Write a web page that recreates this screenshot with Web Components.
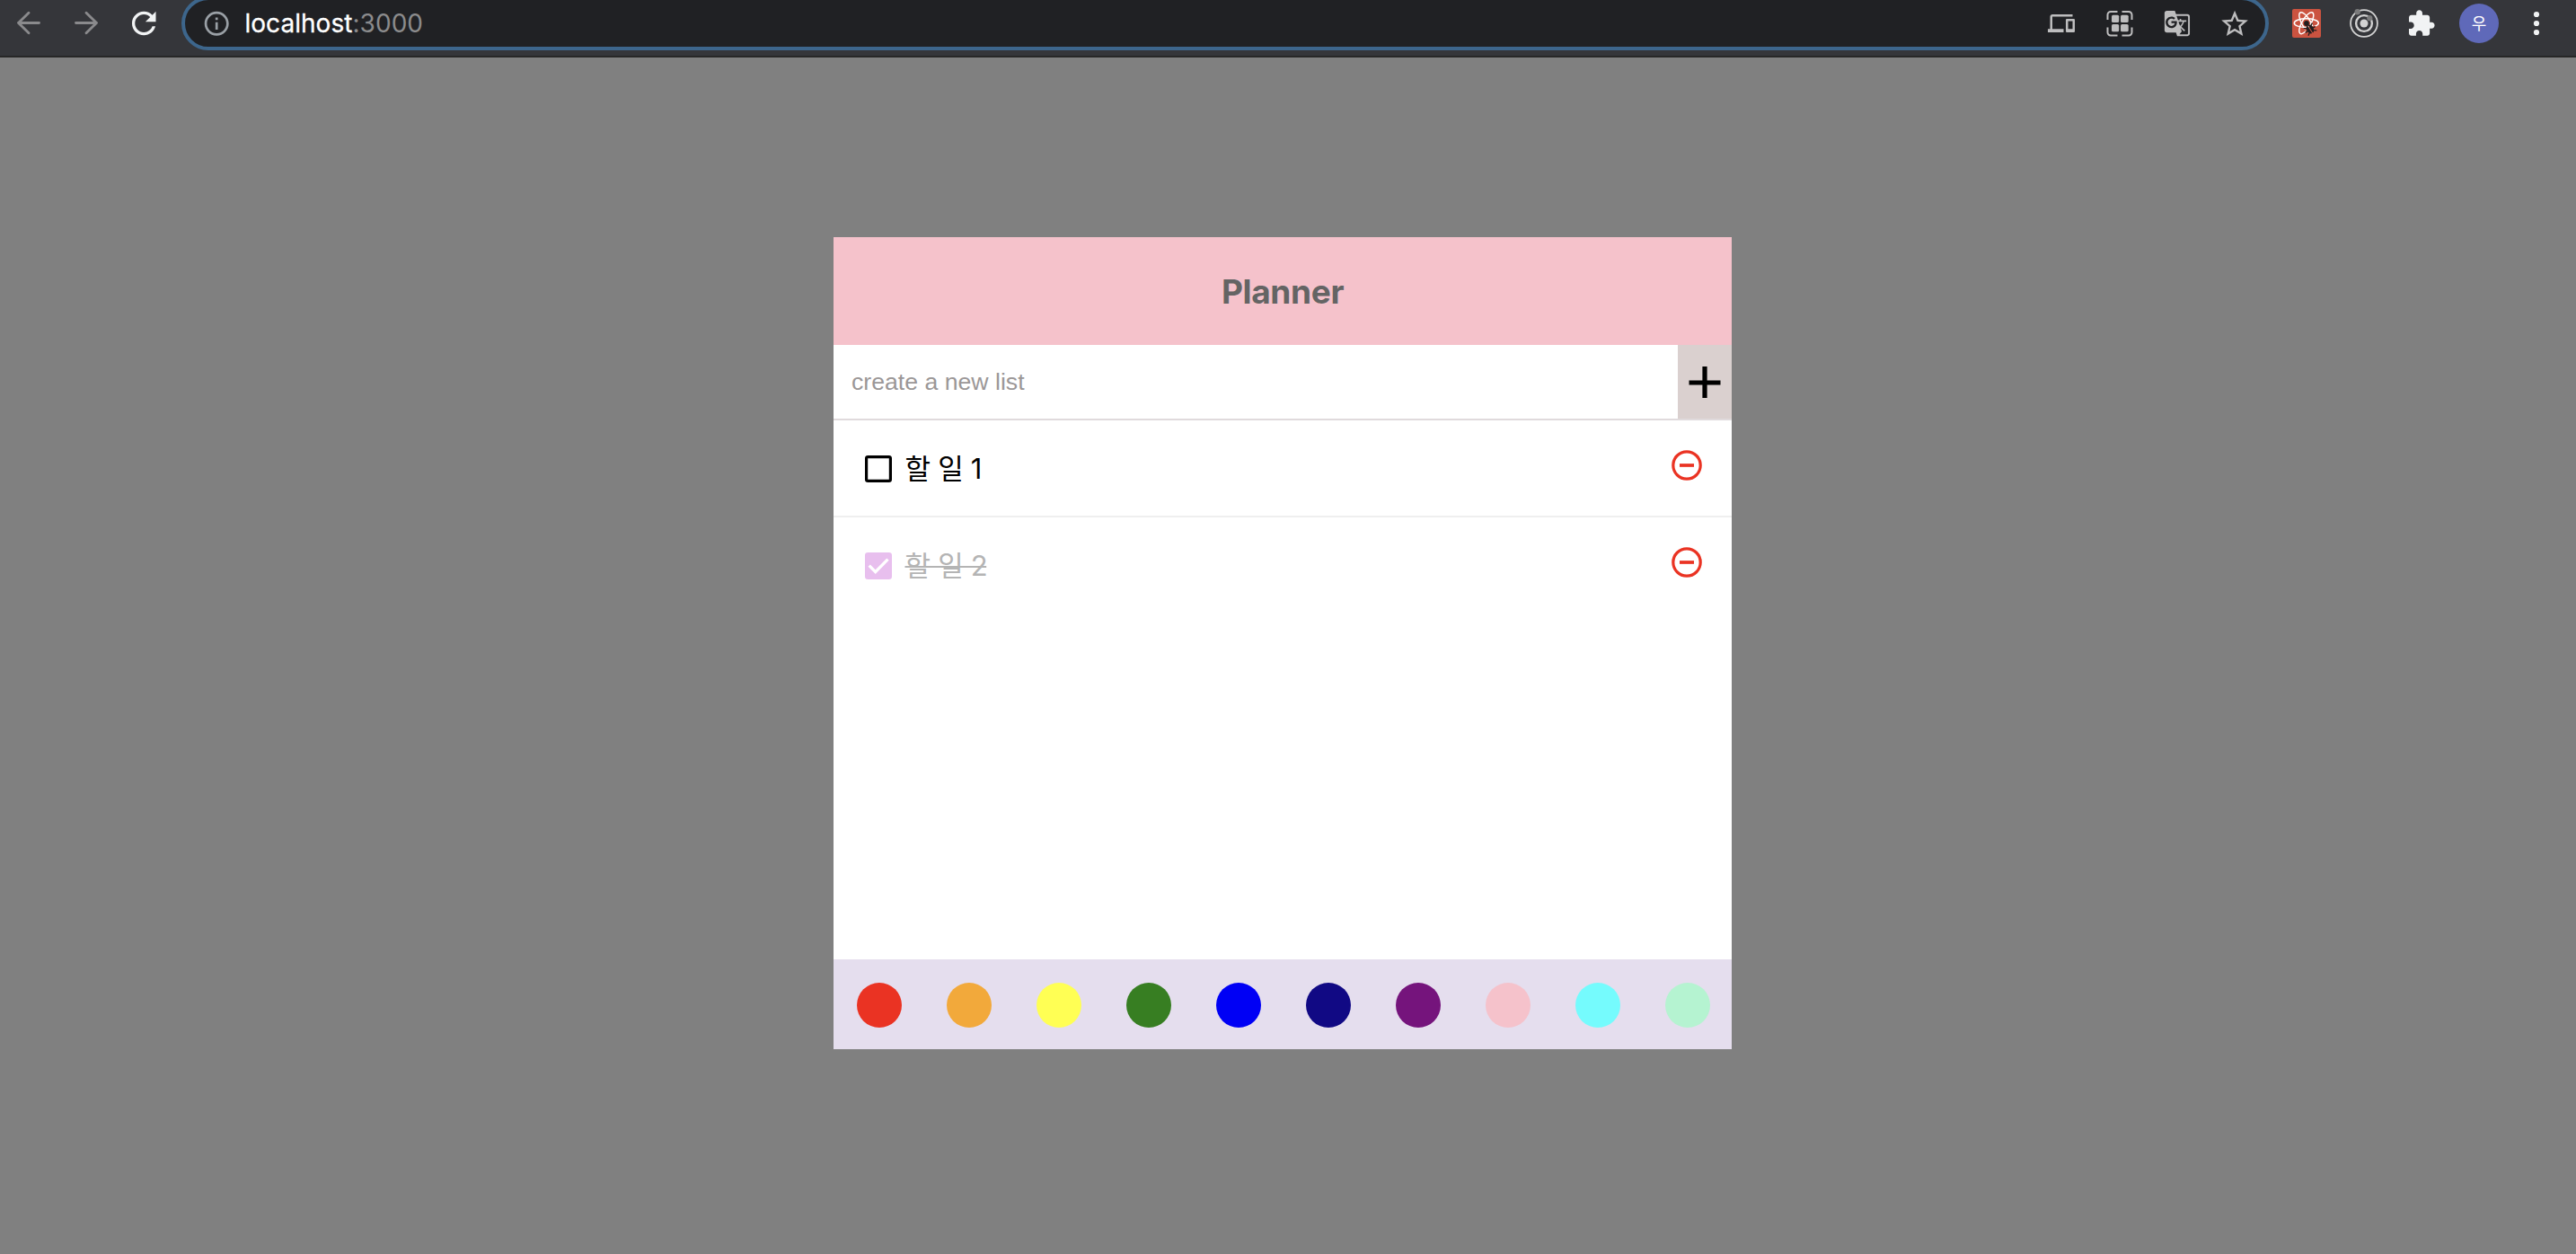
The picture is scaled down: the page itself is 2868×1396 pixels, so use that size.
<!DOCTYPE html>
<html lang="ko">
<head>
<meta charset="utf-8">
<title>Planner</title>
<style>
body {
  margin: 0;
  height: 1396px;
  overflow: hidden;
  background: #808080;
  font-family: Inter, "Noto Sans CJK KR", sans-serif;
}
</style>
</head>
<body>
<browser-bar>
  <bar-icon slot="nav" name="back"></bar-icon>
  <bar-icon slot="nav" name="forward"></bar-icon>
  <bar-icon slot="nav" name="reload"></bar-icon>
  <url-box host="localhost" port=":3000">
    <bar-icon name="devices"></bar-icon>
    <bar-icon name="qr"></bar-icon>
    <bar-icon name="translate"></bar-icon>
    <bar-icon name="star"></bar-icon>
  </url-box>
  <bar-icon slot="tools" name="react"></bar-icon>
  <bar-icon slot="tools" name="target"></bar-icon>
  <bar-icon slot="tools" name="puzzle"></bar-icon>
  <user-avatar slot="tools">우</user-avatar>
  <bar-icon slot="tools" name="menu"></bar-icon>
</browser-bar>
<planner-app>
  <span slot="title">Planner</span>
  <todo-input slot="input" placeholder="create a new list"></todo-input>
  <todo-item>할 일 1</todo-item>
  <todo-item checked>할 일 2</todo-item>
  <color-palette slot="palette" colors="#ea3323,#f2a93b,#ffff54,#377e22,#0000f5,#110984,#75147c,#f5c2cb,#75fbfd,#b5f3d1"></color-palette>
</planner-app>

<script>
/**
 * Small base: every element renders its html into an open shadow root.
 */
class BaseElement extends HTMLElement {
  constructor() {
    super();
    this.template = document.createElement("template");
    this.attachShadow({ mode: "open" });
  }
  connectedCallback() {
    this.render();
  }
  render() {
    this.template.innerHTML = this.html;
    this.shadowRoot.replaceChildren(this.template.content.cloneNode(true));
  }
}

// each icon is drawn in a 64x52 slot
const ICONS = {
  back: `<path d="M43.5 25.5H20.5M32 14.3 20.5 25.5 32 36.7" fill="none" stroke="#8a8a8c" stroke-width="2.9" stroke-linecap="round" stroke-linejoin="round"/>`,
  forward: `<path d="M20.5 25.5H43.5M32 14.3 43.5 25.5 32 36.7" fill="none" stroke="#8a8a8c" stroke-width="2.9" stroke-linecap="round" stroke-linejoin="round"/>`,
  reload: `<path transform="translate(12.3 6.1) scale(1.66)" fill="#f1f3f4" d="M17.65 6.35C16.2 4.9 14.21 4 12 4c-4.42 0-7.99 3.58-7.99 8s3.57 8 7.99 8c3.73 0 6.84-2.55 7.73-6h-2.08c-.82 2.33-3.04 4-5.65 4-3.31 0-6-2.69-6-6s2.69-6 6-6c1.66 0 3.14.69 4.22 1.78L13 11h7V4l-2.35 2.35z"/>`,
  devices: `<path transform="translate(16 11) scale(1.25)" fill="#bdbdbe" d="M4 6h18V4H4c-1.1 0-2 .9-2 2v11H0v3h14v-3H4V6zm19 2h-6c-.55 0-1 .45-1 1v10c0 .55.45 1 1 1h6c.55 0 1-.45 1-1V9c0-.55-.45-1-1-1zm-1 9h-4v-7h4v7z"/>`,
  qr: `<path fill="none" stroke="#bdbdbe" stroke-width="2" d="M18.5 22V16.5a3.5 3.5 0 0 1 3.5-3.5H29.5M34.5 13H42a3.5 3.5 0 0 1 3.5 3.5V22M45.5 30.500V36a3.5 3.5 0 0 1-3.5 3.5H34.5M29.5 39.5H22a3.5 3.5 0 0 1-3.5-3.5V30.5"/><g fill="#bdbdbe"><rect x="23" y="16.8" width="8.2" height="8.3" rx="1.5"/><rect x="33" y="16.8" width="8.7" height="8.3" rx="1.5"/><rect x="23" y="27" width="8.2" height="8.3" rx="1.5"/><rect x="33" y="27" width="8.7" height="8.3" rx="1.5"/></g>`,
  translate: `<path transform="translate(16.6 10.7) scale(1.28)" fill="#bdbdbe" d="M21 4H11l-1-3H3c-1.1 0-2 .9-2 2v15c0 1.1.9 2 2 2h8l1 3h9c1.1 0 2-.9 2-2V6c0-1.1-.9-2-2-2zM7 16c-2.76 0-5-2.24-5-5s2.24-5 5-5c1.35 0 2.48.5 3.35 1.3L9.03 8.57c-.38-.36-1.04-.78-2.03-.78-1.74 0-3.15 1.44-3.15 3.21S5.26 14.21 7 14.21c2.01 0 2.84-1.44 2.92-2.41H7v-1.71h4.68c.07.31.12.61.12 1.02C11.8 13.97 9.89 16 7 16zm6.17-5.42h3.7c-.43 1.25-1.11 2.43-2.05 3.47-.31-.35-.6-.72-.86-1.1l-.79-2.37zm8.33 9.92c0 .55-.45 1-1 1H14l2-2.5-1.04-3.1 3.1 3.1.92-.92-3.3-3.25.02-.02c1.13-1.25 1.93-2.69 2.4-4.22H20v-1.3h-4.53V8h-1.29v1.29h-1.44L11.46 5.5h9.04c.55 0 1 .45 1 1v14z"/>`,
  star: `<path transform="translate(14.3 8.9) scale(1.48)" fill="#bdbdbe" d="M22 9.24l-7.19-.62L12 2 9.19 8.63 2 9.24l5.46 4.73L5.82 21 12 17.27 18.18 21l-1.63-7.03L22 9.24zM12 15.4l-3.76 2.27 1-4.28-3.32-2.88 4.38-.38L12 6.1l1.71 4.04 4.38.38-3.32 2.88 1 4.28L12 15.4z"/>`,
  react: `<rect x="16" y="10" width="32" height="32" rx="2" fill="#cb5340"/>
    <g fill="none" stroke="#fff" stroke-width="1.5"><ellipse cx="31.8" cy="25.7" rx="13.5" ry="4.9"/><ellipse cx="31.8" cy="25.7" rx="13.5" ry="4.9" transform="rotate(60 31.8 25.7)"/><ellipse cx="31.8" cy="25.7" rx="13.5" ry="4.9" transform="rotate(120 31.8 25.7)"/></g>
    <path d="M30 31.5 41 28.500l2 6-4 6H32z" fill="#cb5340"/>
    <circle cx="32" cy="26" r="2.9" fill="#221e1f"/>
    <g transform="translate(36 32.5) rotate(-32)" fill="#221e1f" stroke="#221e1f" stroke-width="1.3"><path stroke="none" d="M-.5-5v10C-5 5-5-5-.5-5zM.5-5v10C5 5 5-5 .5-5z"/><path d="M-3-3l-2.7-1.6M-3.500.5h-3M-3 3.200l-2.500 1.800M3-3l2.700-1.600M3.500.5h3M3 3.200l2.500 1.800"/></g>`,
  target: `<g fill="none" stroke="#d2d2d2"><circle cx="32" cy="26" r="14.9" stroke-width="1.8"/><circle cx="32" cy="26" r="8.9" stroke-width="2.4"/></g><circle cx="32" cy="26" r="4.5" fill="#d2d2d2"/><circle cx="24.7" cy="13.3" r="3.2" fill="#7a7a7b"/><circle cx="38.3" cy="20.2" r="3.1" fill="#7a7a7b"/>`,
  puzzle: `<path transform="translate(15.3 9.9) scale(1.36)" fill="#f1f3f4" d="M20.5 11H19V7c0-1.1-.9-2-2-2h-4V3.5C13 2.12 11.88 1 10.5 1S8 2.12 8 3.5V5H4c-1.1 0-1.99.9-1.99 2v3.8H3.5c1.49 0 2.7 1.21 2.7 2.7s-1.21 2.7-2.7 2.7H2V20c0 1.1.9 2 2 2h3.8v-1.5c0-1.49 1.21-2.7 2.7-2.7 1.49 0 2.7 1.21 2.7 2.7V22H17c1.1 0 2-.9 2-2v-4h1.5c1.38 0 2.5-1.12 2.5-2.5S21.88 11 20.5 11z"/>`,
  menu: `<g fill="#f1f3f4"><circle cx="32" cy="16" r="3.1"/><circle cx="32" cy="26" r="3.1"/><circle cx="32" cy="36" r="3.1"/></g>`,
};

class BarIcon extends BaseElement {
  get html() {
    return `
<style>
:host { display: block; flex: none; width: 64px; height: 52px; }
svg { display: block; }
</style>
<svg width="64" height="52" viewBox="0 0 64 52">${ICONS[this.getAttribute("name")]}</svg>`;
  }
}
customElements.define("bar-icon", BarIcon);

class UserAvatar extends BaseElement {
  get html() {
    return `
<style>
:host {
  display: flex;
  align-items: center;
  justify-content: center;
  width: 64px;
  height: 52px;
}
.circle {
  width: 44px;
  height: 44px;
  border-radius: 50%;
  background: #5f69b9;
  color: #fff;
  font: 18px/43px "Noto Sans CJK KR", sans-serif;
  text-align: center;
}
</style>
<div class="circle"><slot></slot></div>`;
  }
}
customElements.define("user-avatar", UserAvatar);

class UrlBox extends BaseElement {
  get html() {
    return `
<style>
:host {
  box-sizing: border-box;
  display: flex;
  align-items: center;
  flex: 1;
  height: 60px;
  margin: -4px 10px 0;
  padding: 0 2px 0 18.5px;
  border: 4px solid #3d668c;
  border-radius: 30px;
  background: #202124;
}
.info { flex: none; margin-top: 1px; }
.url {
  flex: 1;
  margin-left: 15.5px;
  font-size: 28px;
  letter-spacing: 0.05px;
  color: #fff;
}
.host { -webkit-text-stroke: 0.3px #fff; }
.port { color: #8b8b8c; }
.actions { display: flex; }
</style>
<svg class="info" width="32.4" height="32.4" viewBox="0 0 24 24"><path fill="#9aa0a6" d="M11 7h2v2h-2zm0 4h2v6h-2zm1-9C6.48 2 2 6.48 2 12s4.48 10 10 10 10-4.48 10-10S17.52 2 12 2zm0 18c-4.41 0-8-3.59-8-8s3.59-8 8-8 8 3.59 8 8-3.59 8-8 8z"/></svg>
<div class="url"><span class="host">${this.getAttribute("host")}</span><span class="port">${this.getAttribute("port")}</span></div>
<div class="actions"><slot></slot></div>`;
  }
}
customElements.define("url-box", UrlBox);

class BrowserBar extends BaseElement {
  get html() {
    return `
<style>
:host {
  display: flex;
  align-items: flex-start;
  height: 62px;
  padding-right: 12px;
  overflow: hidden;
  background: #35363a;
  border-bottom: 2px solid #272727;
}
nav, .tools { display: flex; flex: none; }
</style>
<nav><slot name="nav"></slot></nav>
<slot></slot>
<div class="tools"><slot name="tools"></slot></div>`;
  }
}
customElements.define("browser-bar", BrowserBar);

class PlannerApp extends BaseElement {
  get html() {
    return `
<style>
:host {
  display: flex;
  flex-direction: column;
  width: 1000px;
  height: 904px;
  margin: 200px 0 0 928px;
  background: #fff;
}
h1 {
  margin: 0;
  height: 120px;
  font-size: 37px;
  font-weight: 700;
  line-height: 122px;
  letter-spacing: -0.35px;
  text-align: center;
  color: #646464;
  background: #f5c2cb;
}
.list { flex: 1; }
</style>
<h1><slot name="title"></slot></h1>
<slot name="input"></slot>
<div class="list"><slot></slot></div>
<slot name="palette"></slot>`;
  }
}
customElements.define("planner-app", PlannerApp);

class TodoInput extends BaseElement {
  get html() {
    return `
<style>
:host {
  display: flex;
  height: 82px;
  border-bottom: 2px solid #e0dadc;
}
.field {
  flex: 1;
  padding-left: 20px;
  font: 26.67px/83px "Liberation Sans", Arial, sans-serif;
  color: #9b9797;
}
.add {
  display: flex;
  align-items: center;
  justify-content: center;
  width: 60px;
  background: #dad0cf;
}
</style>
<div class="field">${this.getAttribute("placeholder")}</div>
<div class="add"><svg width="36" height="36" viewBox="0 0 36 36"><path d="M18 1v35M.5 19h35" stroke="#000" stroke-width="5.2"/></svg></div>`;
  }
}
customElements.define("todo-input", TodoInput);

class TodoItem extends BaseElement {
  get checked() {
    return this.hasAttribute("checked");
  }
  get html() {
    return `
<style>
:host {
  box-sizing: border-box;
  display: flex;
  align-items: center;
  height: 108px;
  padding: 0 30px;
  border-bottom: 2px solid #efefef;
  font-size: 31px;
}
:host(:last-of-type) { border-bottom-color: transparent; }
:host([checked]) .text { color: #b4b4b4; text-decoration: line-through; text-decoration-thickness: 2px; }
.box { flex: none; margin-top: 2px; }
.text { letter-spacing: -1.5px; word-spacing: 2.4px; }
.label { flex: 1; margin: 0 0 4px 9.5px; }
.remove { flex: none; margin: 0 0 6px; }
</style>
<svg class="box" width="40" height="40" viewBox="0 0 40 40">${
      this.checked
        ? `<rect x="5" y="5" width="30" height="30" rx="3.3" fill="#e8bfee"/><path d="M9.7 19.7 16.7 26.7 30.5 12.7" fill="none" stroke="#fff" stroke-width="3.3"/>`
        : `<rect x="6.6" y="6.6" width="26.8" height="26.8" rx="1.7" fill="none" stroke="#000" stroke-width="3.2"/>`
    }</svg>
<div class="label"><span class="text"><slot></slot></span></div>
<svg class="remove" width="40" height="40" viewBox="0 0 40 40"><circle cx="20" cy="20" r="15.2" fill="none" stroke="#ea3323" stroke-width="3.2"/><path d="M12 20h16" stroke="#ea3323" stroke-width="3.7"/></svg>`;
  }
}
customElements.define("todo-item", TodoItem);

class ColorPalette extends BaseElement {
  get html() {
    const dots = this.getAttribute("colors")
      .split(",")
      .map((color) => `<i style="background:${color}"></i>`)
      .join("");
    return `
<style>
:host {
  box-sizing: border-box;
  display: flex;
  gap: 50px;
  height: 100px;
  padding: 26px 24px 24px 26px;
  background: #e5deee;
}
i { flex: none; width: 50px; height: 50px; border-radius: 50%; }
</style>
${dots}`;
  }
}
customElements.define("color-palette", ColorPalette);
</script>
</body>
</html>
